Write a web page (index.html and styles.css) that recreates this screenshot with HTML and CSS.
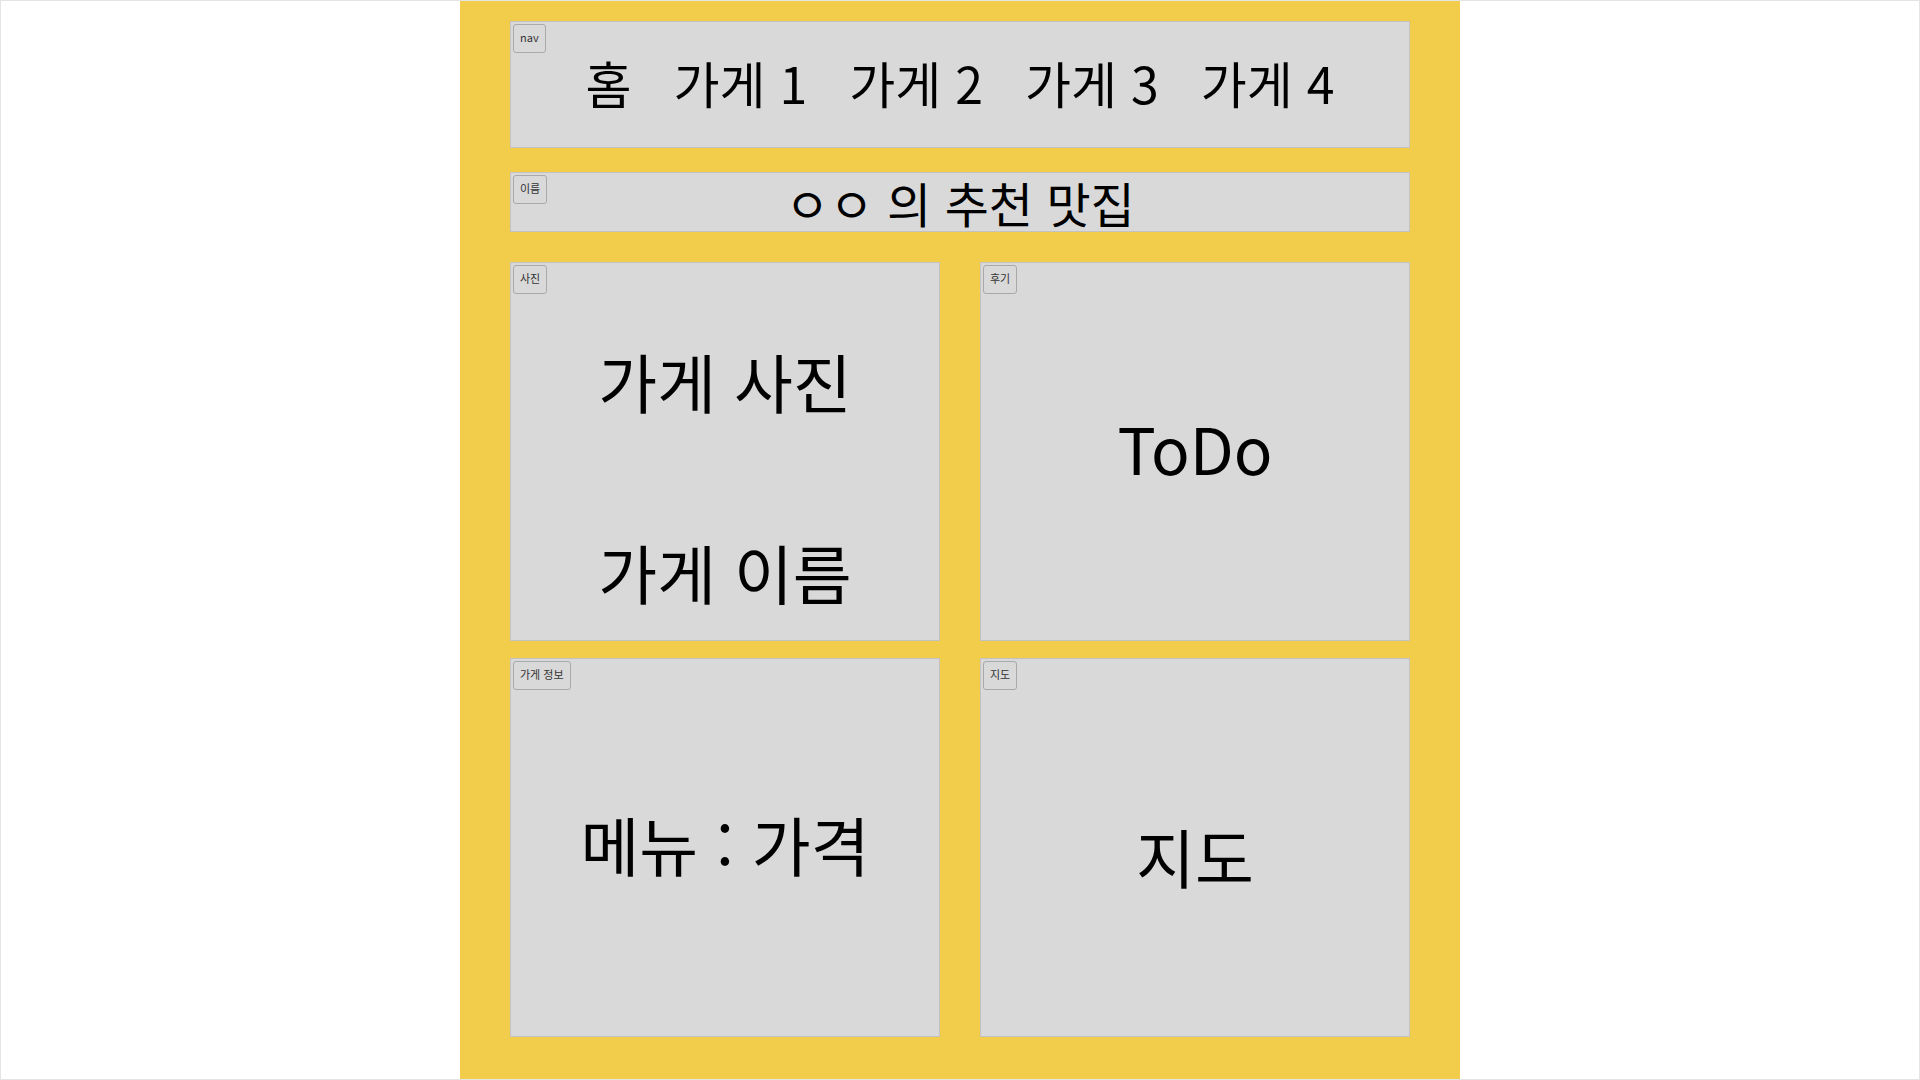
FILE: index.html
```html
<!DOCTYPE html>
<html lang="ko">
<head>
    <meta charset="utf-8">
    <title>맛집 추천</title>
    <link rel="stylesheet" href="styles.css">
</head>
<body>

<div class="page">
    <div class="board">

        <div class="box nav-box">
            <span class="tag">nav</span>
            <ul class="nav-list">
                <li>홈</li>
                <li>가게 1</li>
                <li>가게 2</li>
                <li>가게 3</li>
                <li>가게 4</li>
            </ul>
        </div>

        <div class="box name-box">
            <span class="tag">이름</span>
            <h1 class="title">ㅇㅇ 의 추천 맛집</h1>
        </div>

        <div class="cards">
            <div class="box card photo-card">
                <span class="tag">사진</span>
                <p class="big">가게 사진</p>
                <p class="big name-line">가게 이름</p>
            </div>

            <div class="box card review-card">
                <span class="tag">후기</span>
                <p class="big">ToDo</p>
            </div>

            <div class="box card info-card">
                <span class="tag">가게 정보</span>
                <p class="big">메뉴 : 가격</p>
            </div>

            <div class="box card map-card">
                <span class="tag">지도</span>
                <p class="big">지도</p>
            </div>
        </div>

    </div>
</div>

</body>
</html>
```

FILE: styles.css
```css
html, body {
    height: 100%;
    margin: 0;
}

body {
    font-family: "Noto Sans CJK KR", sans-serif;
    color: #000;
    background: #fff;
}

.page {
    height: 100%;
    box-sizing: border-box;
    border: 1px solid #e4e4e4;
    display: flex;
    justify-content: center;
    overflow: hidden;
}

.board {
    width: 1000px;
    background: #f2cd4b;
    padding: 20px 50px 0;
    box-sizing: border-box;
    display: flex;
    flex-direction: column;
}

.box {
    position: relative;
    background: #d9d9d9;
    border: 1px solid #c2c2c2;
    box-sizing: border-box;
}

.tag {
    position: absolute;
    top: 2px;
    left: 2px;
    height: 29px;
    padding: 0 6px;
    box-sizing: border-box;
    border: 1px solid #a9a9a9;
    border-radius: 3px;
    font-size: 11px;
    line-height: 25px;
    color: #333;
}

/* nav */
.nav-box {
    height: 127px;
    padding-bottom: 6px;
    display: flex;
    align-items: center;
    justify-content: center;
}

.nav-list {
    list-style: none;
    margin: 0;
    padding: 0;
    display: flex;
    gap: 42px;
    font-size: 50px;
    line-height: 60px;
}

/* 이름 */
.name-box {
    margin-top: 24px;
    height: 60px;
    display: flex;
    align-items: center;
    justify-content: center;
}

.title {
    margin: 0;
    font-size: 48px;
    font-weight: normal;
    line-height: 58px;
}

/* cards */
.cards {
    margin-top: 30px;
    display: grid;
    grid-template-columns: 430px 430px;
    grid-template-rows: 379px 379px;
    column-gap: 40px;
    row-gap: 17px;
}

.card {
    display: flex;
    flex-direction: column;
    align-items: center;
    justify-content: center;
}

.big {
    margin: 0;
    font-size: 64px;
    line-height: 86px;
}

.photo-card {
    justify-content: flex-start;
    padding-top: 74px;
}

.name-line {
    margin-top: 105px;
}

.review-card {
    padding-bottom: 9px;
}

.info-card {
    padding-bottom: 9px;
}

.map-card {
    padding-top: 15px;
}
```
